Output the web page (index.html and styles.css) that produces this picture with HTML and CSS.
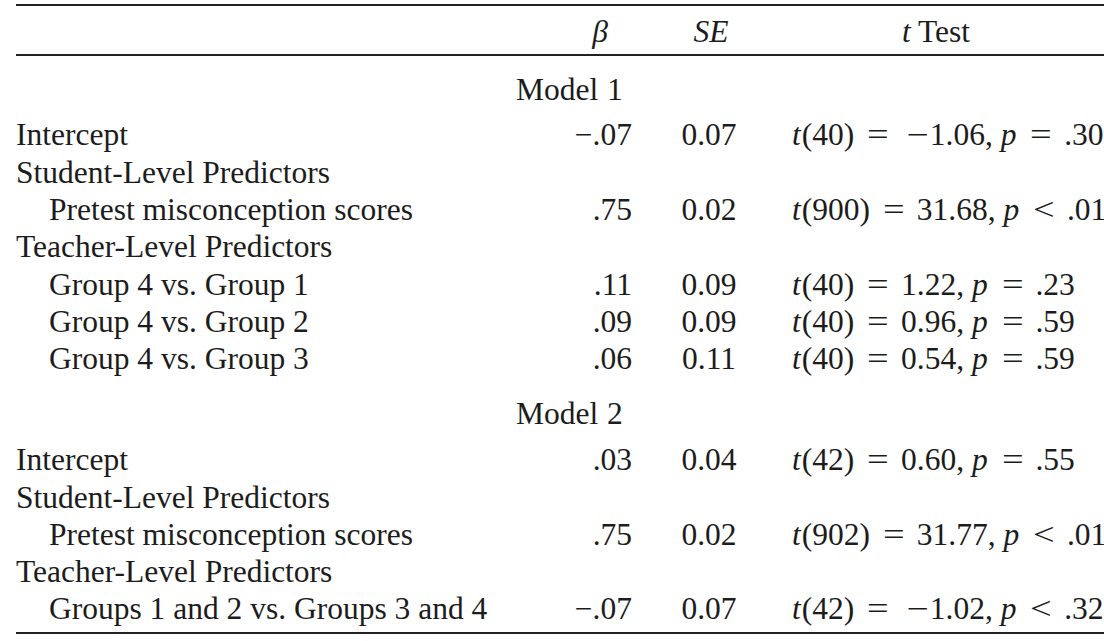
FILE: index.html
```html
<!DOCTYPE html>
<html>
<head>
<meta charset="utf-8">
<link rel="stylesheet" href="styles.css">
</head>
<body>
<div class="table">
  <div class="row head">
    <div class="c-label"></div>
    <div class="c-beta h-beta"><i>β</i></div>
    <div class="c-se h-se"><i>SE</i></div>
    <div class="c-t h-t"><i>t</i> Test</div>
  </div>

  <div class="model first">Model 1</div>
  <div class="section">
    <div class="row"><div class="c-label">Intercept</div><div class="c-beta">−.07</div><div class="c-se">0.07</div><div class="c-t"><i class="v">t</i>(40)<span class="op">=</span><span class="neg">−</span>1.06, <i class="v">p</i><span class="op">=</span>.30</div></div>
    <div class="row"><div class="c-label">Student-Level Predictors</div></div>
    <div class="row"><div class="c-label sub">Pretest misconception scores</div><div class="c-beta">.75</div><div class="c-se">0.02</div><div class="c-t"><i class="v">t</i>(900)<span class="op">=</span>31.68, <i class="v">p</i><span class="op">&lt;</span>.01</div></div>
    <div class="row"><div class="c-label">Teacher-Level Predictors</div></div>
    <div class="row"><div class="c-label sub">Group 4 vs. Group 1</div><div class="c-beta">.11</div><div class="c-se">0.09</div><div class="c-t"><i class="v">t</i>(40)<span class="op">=</span>1.22, <i class="v">p</i><span class="op">=</span>.23</div></div>
    <div class="row"><div class="c-label sub">Group 4 vs. Group 2</div><div class="c-beta">.09</div><div class="c-se">0.09</div><div class="c-t"><i class="v">t</i>(40)<span class="op">=</span>0.96, <i class="v">p</i><span class="op">=</span>.59</div></div>
    <div class="row"><div class="c-label sub">Group 4 vs. Group 3</div><div class="c-beta">.06</div><div class="c-se">0.11</div><div class="c-t"><i class="v">t</i>(40)<span class="op">=</span>0.54, <i class="v">p</i><span class="op">=</span>.59</div></div>
  </div>

  <div class="model second">Model 2</div>
  <div class="section last">
    <div class="row"><div class="c-label">Intercept</div><div class="c-beta">.03</div><div class="c-se">0.04</div><div class="c-t"><i class="v">t</i>(42)<span class="op">=</span>0.60, <i class="v">p</i><span class="op">=</span>.55</div></div>
    <div class="row"><div class="c-label">Student-Level Predictors</div></div>
    <div class="row"><div class="c-label sub">Pretest misconception scores</div><div class="c-beta">.75</div><div class="c-se">0.02</div><div class="c-t"><i class="v">t</i>(902)<span class="op">=</span>31.77, <i class="v">p</i><span class="op">&lt;</span>.01</div></div>
    <div class="row"><div class="c-label">Teacher-Level Predictors</div></div>
    <div class="row"><div class="c-label sub">Groups 1 and 2 vs. Groups 3 and 4</div><div class="c-beta">−.07</div><div class="c-se">0.07</div><div class="c-t"><i class="v">t</i>(42)<span class="op">=</span><span class="neg">−</span>1.02, <i class="v">p</i><span class="op">&lt;</span>.32</div></div>
  </div>
</div>
</body>
</html>
```
FILE: styles.css
```css
html, body {
  margin: 0;
  padding: 0;
  background: #ffffff;
  overflow: hidden;
}
body {
  width: 1104px;
  height: 641px;
  font-family: "Liberation Serif", "Times New Roman", serif;
  font-size: 31.5px;
  color: #1c1c1c;
}
.table {
  margin: 4px 0 0 16px;
  width: 1200px;
  border-top: 2px solid #222222;
  border-bottom: 2px solid #222222;
}
.row {
  display: grid;
  grid-template-columns: 544px 72px 158px 430px;
  height: 37.3px;
  line-height: 37.3px;
  white-space: nowrap;
}
.row.head {
  height: 37.3px;
  padding-top: 7px;
  padding-bottom: 3.7px;
  border-bottom: 2px solid #222222;
}
.c-label.sub {
  padding-left: 33px;
}
.c-beta {
  text-align: right;
}
.c-se {
  text-align: center;
  padding-right: 4px;
}
.c-t {
  padding-left: 2px;
}
.h-beta {
  padding-right: 24px;
}
.h-se {
  padding-right: 0;
}
.h-t {
  padding-left: 112px;
}
.c-t i.v {
  margin-right: 1px;
}
.op {
  display: inline-block;
  transform: scaleX(1.22);
  margin: 0 14px 0 15px;
}
.neg {
  display: inline-block;
  transform: scaleX(1.25);
  margin-left: 8px;
  margin-right: 3px;
}
.model {
  height: 37.3px;
  line-height: 37.3px;
  padding-left: 500px;
  word-spacing: 1px;
}
.model.first {
  margin-top: 15.5px;
  margin-bottom: 7.6px;
}
.model.second {
  margin-top: 17.5px;
  margin-bottom: 9px;
}
.section.last {
  margin-bottom: 4.5px;
}
i {
  font-style: italic;
}
```
